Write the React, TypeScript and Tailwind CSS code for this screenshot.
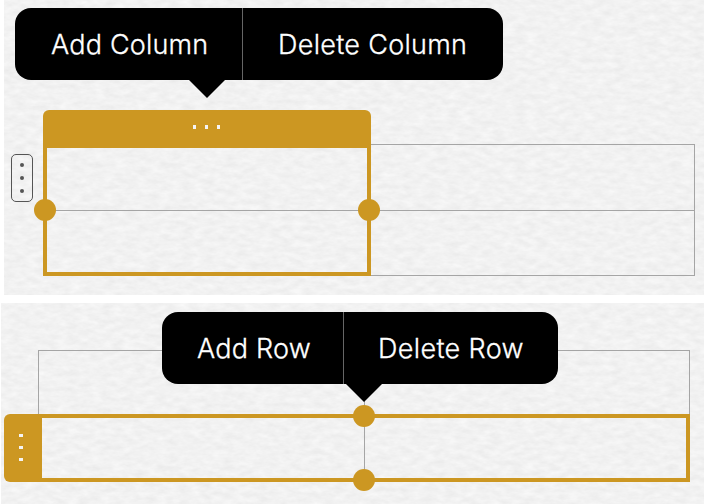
import React from "react";

function Paper({ id }: { id: string }) {
  return (
    <svg className="absolute inset-0 h-full w-full" aria-hidden="true">
      <filter id={id} x="0" y="0" width="100%" height="100%" colorInterpolationFilters="sRGB">
        <feTurbulence type="fractalNoise" baseFrequency="0.09 0.19" numOctaves={3} seed={7} />
        <feColorMatrix values="0.07 0 0 0 0.912  0.07 0 0 0 0.912  0.07 0 0 0 0.912  0 0 0 0 1" />
      </filter>
      <rect width="100%" height="100%" filter={`url(#${id})`} />
    </svg>
  );
}

function Knob({ className }: { className: string }) {
  return <div className={`absolute size-[22px] rounded-full bg-[#cc9722] ${className}`} />;
}

type MenuItem = { label: string; className: string; text: string };

function Menu({ items, className, arrow }: { items: MenuItem[]; className: string; arrow: string }) {
  return (
    <div className={`flex h-[72px] rounded-2xl bg-black text-white ${className}`}>
      {items.map((item) => (
        <button
          key={item.label}
          className={`flex items-center whitespace-nowrap pt-0.5 font-['Inter',sans-serif] text-[27px] font-light [-webkit-text-stroke:0.3px_white] ${item.className}`}
        >
          <span className={item.text}>{item.label}</span>
        </button>
      ))}
      <svg className={`absolute top-[71px] h-[19px] w-9 ${arrow}`} viewBox="0 0 36 19">
        <path d="M0 0H36V1L18 19L0 1Z" fill="#000" />
      </svg>
    </div>
  );
}

function ColumnEditor() {
  return (
    <section className="relative ml-1 h-[295px] overflow-hidden">
      <Paper id="paper-column" />
      <div className="relative pt-2">
        <Menu
          className="relative ml-[11px] w-[488px]"
          arrow="left-[173.5px]"
          items={[
            { label: "Add Column", className: "w-[228px] border-r border-[#666] pl-9", text: "tracking-[0.2px]" },
            { label: "Delete Column", className: "pl-[35px]", text: "tracking-[0.3px]" },
          ]}
        />
        <div className="mt-[30px] flex">
          <div className="ml-[7px] mt-11 flex h-12 w-[22px] flex-col items-center justify-center gap-[9px] rounded-[5px] border border-[#555]">
            <i className="size-1 rounded-full bg-[#555]" />
            <i className="size-1 rounded-full bg-[#555]" />
            <i className="size-1 rounded-full bg-[#555]" />
          </div>
          <div className="relative ml-[10px] h-[166px] w-[328px]">
            <div className="flex h-[38px] items-start justify-center gap-[9px] rounded-t-md bg-[#cc9722] pr-px pt-[15px]">
              <i className="h-1 w-[3px] bg-[#f4f4f4]" />
              <i className="h-1 w-[3px] bg-[#f4f4f4]" />
              <i className="h-1 w-[3px] bg-[#f4f4f4]" />
            </div>
            <div className="h-32 border-x-4 border-b-4 border-[#cc9722]">
              <div className="h-[63px] border-b border-[#a5a5a5]" />
            </div>
            <Knob className="-left-[9px] top-[89px]" />
            <Knob className="-right-[9px] top-[89px]" />
          </div>
          <div className="mt-[34px] h-[132px] w-[324px] border-y border-r border-[#a5a5a5]">
            <div className="h-[66px] border-b border-[#a5a5a5]" />
          </div>
        </div>
      </div>
    </section>
  );
}

function RowEditor() {
  return (
    <section className="relative ml-px mt-2 h-[201px] overflow-hidden">
      <Paper id="paper-row" />
      <div className="relative pt-[47px]">
        <div className="ml-[37px] flex h-16 w-[652px] border-x border-t border-[#a5a5a5]">
          <div className="w-[326px] border-r border-[#a5a5a5]" />
        </div>
        <div className="relative ml-[3px] flex h-[68px] w-[686px]">
          <div className="flex w-[38px] flex-col items-center justify-center gap-[9px] rounded-l-md bg-[#cc9722] pb-px pr-1">
            <i className="h-[3px] w-1 bg-[#f4f4f4]" />
            <i className="h-[3px] w-1 bg-[#f4f4f4]" />
            <i className="h-[3px] w-1 bg-[#f4f4f4]" />
          </div>
          <div className="flex flex-1 border-y-4 border-r-4 border-[#cc9722]">
            <div className="w-[323px] border-r border-[#a5a5a5]" />
          </div>
          <Knob className="-top-[9px] left-[349px]" />
          <Knob className="-bottom-[9px] left-[349px]" />
        </div>
        <Menu
          className="absolute left-[161px] top-[9px] w-[396px]"
          arrow="left-[183.5px]"
          items={[
            { label: "Add Row", className: "w-[182px] border-r border-[#666] pl-[35px]", text: "tracking-[0.2px]" },
            { label: "Delete Row", className: "pl-[34px]", text: "tracking-[0.35px]" },
          ]}
        />
      </div>
    </section>
  );
}

export default function App() {
  return (
    <main className="h-[504px] w-[704px] overflow-hidden bg-white">
      <ColumnEditor />
      <RowEditor />
    </main>
  );
}
